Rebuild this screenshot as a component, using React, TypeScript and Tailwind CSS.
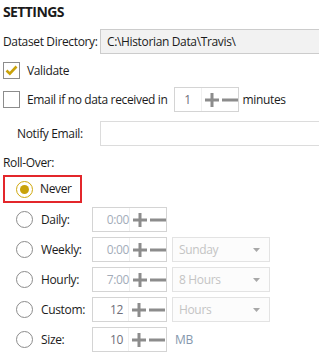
import React from "react";

const Plus = ({ color = "#8c8c8c" }: { color?: string }) => (
  <svg width="14" height="14" viewBox="0 0 14 14" className="shrink-0">
    <rect x="0" y="5.5" width="14" height="3" fill={color} />
    <rect x="5.5" y="0" width="3" height="14" fill={color} />
  </svg>
);
const Minus = ({ color = "#8c8c8c" }: { color?: string }) => (
  <svg width="16" height="14" viewBox="0 0 16 14" className="shrink-0">
    <rect x="0" y="5.5" width="16" height="3" fill={color} />
  </svg>
);

function Spinner({
  value,
  width,
  numW,
  padR,
  disabled,
  align = "right",
}: {
  value: string;
  width: number;
  numW: number;
  padR: number;
  disabled?: boolean;
  align?: "right" | "center";
}) {
  return (
    <div
      className="flex h-[25px] items-center border border-[#d4d4d4] bg-white"
      style={{ width }}
    >
      <div
        className={
          "flex h-full items-center border-r border-[#f0f0f0] " +
          (align === "right" ? "justify-end" : "justify-center") +
          " " +
          (disabled ? "text-[#a3acb9]" : "text-[#6f6f7a]")
        }
        style={{ width: numW, paddingRight: padR }}
      >
        {value}
      </div>
      <div className="flex h-full items-center gap-[3px] pl-[3px]">
        <Plus />
        <Minus />
      </div>
    </div>
  );
}

function Radio({ checked }: { checked?: boolean }) {
  return (
    <div
      className={
        "flex h-[17px] w-[17px] shrink-0 items-center justify-center rounded-full border " +
        (checked ? "border-[#cfa80e]" : "border-[#8c8c8c]")
      }
    >
      {checked && <div className="h-[9px] w-[9px] rounded-full bg-[#c9a20a]" />}
    </div>
  );
}

function Dropdown({ text }: { text: string }) {
  return (
    <div className="ml-[5px] flex h-[25px] w-[98px] items-center justify-between border border-[#e3e3e3] bg-[#fcfcfc] pl-[6px] pr-[9px] text-[#c4c4c4]">
      <span>{text}</span>
      <svg width="7" height="4" viewBox="0 0 7 4">
        <polygon points="0,0 7,0 3.5,4" fill="#a8a8a8" />
      </svg>
    </div>
  );
}

export default function App() {
  return (
    <div
      className="relative h-[362px] w-[319px] overflow-hidden whitespace-nowrap bg-white text-[12px] tracking-[-0.35px] text-[#1b1b1b]"
      style={{ fontFamily: '"Open Sans", "Noto Sans", sans-serif' }}
    >
      <div className="flex flex-col">
        <div className="h-[22px] pl-[3px] pt-[1px] text-[14px] font-bold leading-[22px] tracking-[-0.6px]">
          SETTINGS
        </div>
        <div className="mt-[7px] flex h-[25px] items-center">
          <div className="w-[100px] shrink-0 pl-[3px]">Dataset Directory:</div>
          <div className="flex h-[25px] w-[240px] shrink-0 items-center border border-[#cccccc] bg-[#f2f2f2] pl-[6px]">
            C:\Historian Data\Travis\
          </div>
        </div>
        <div className="mt-[8px] flex h-[17px] items-center pl-[3px]">
          <div className="flex h-[17px] w-[17px] items-center justify-center border border-[#8c8c8c]">
            <svg width="13" height="11" viewBox="0 0 13 11">
              <polyline
                points="1.5,5.5 4.8,8.6 11.5,1.5"
                fill="none"
                stroke="#c9a20a"
                strokeWidth="2.6"
              />
            </svg>
          </div>
          <span className="ml-[7px]">Validate</span>
        </div>
        <div className="mt-[8px] flex h-[25px] items-center pl-[3px]">
          <div className="h-[17px] w-[17px] border border-[#8c8c8c]" />
          <span className="ml-[7px]">Email if no data received in</span>
          <div className="ml-[6px]">
            <Spinner value="1" width={65} numW={27} padR={0} align="center" />
          </div>
          <span className="ml-[4px]">minutes</span>
        </div>
        <div className="mt-[9px] flex h-[25px] items-center">
          <div className="w-[100px] shrink-0 pl-[17px]">Notify Email:</div>
          <div className="h-[25px] w-[240px] shrink-0 border border-[#dcdcdc] bg-white" />
        </div>
        <div className="mt-[9px] flex h-[16px] items-center pl-[3px]">Roll-Over:</div>
        <div className="mt-[4px] pl-[3px]">
          <div className="flex h-[28px] w-[79px] items-center border-2 border-[#e3262b] pl-[11px]">
            <Radio checked />
            <span className="ml-[7px]">Never</span>
          </div>
        </div>
        {[
          { label: "Daily:", value: "0:00", disabled: true },
          { label: "Weekly:", value: "0:00", disabled: true, dd: "Sunday" },
          { label: "Hourly:", value: "7:00", disabled: true, dd: "8 Hours" },
          { label: "Custom:", value: "12", dd: "Hours" },
          { label: "Size:", value: "10", mb: true },
        ].map((r, i) => (
          <div
            key={r.label}
            className={(i === 0 ? "mt-[4px]" : "mt-[5px]") + " flex h-[25px] items-center pl-[16px]"}
          >
            <Radio />
            <span className="ml-[8px] w-[51px]">{r.label}</span>
            <Spinner
              value={r.value}
              width={75}
              numW={r.disabled ? 40 : 36}
              padR={r.disabled ? 0 : 5}
              disabled={r.disabled}
              align="right"
            />
            {r.dd && <Dropdown text={r.dd} />}
            {r.mb && <span className="ml-[8px] text-[#8597ad]">MB</span>}
          </div>
        ))}
      </div>
    </div>
  );
}
